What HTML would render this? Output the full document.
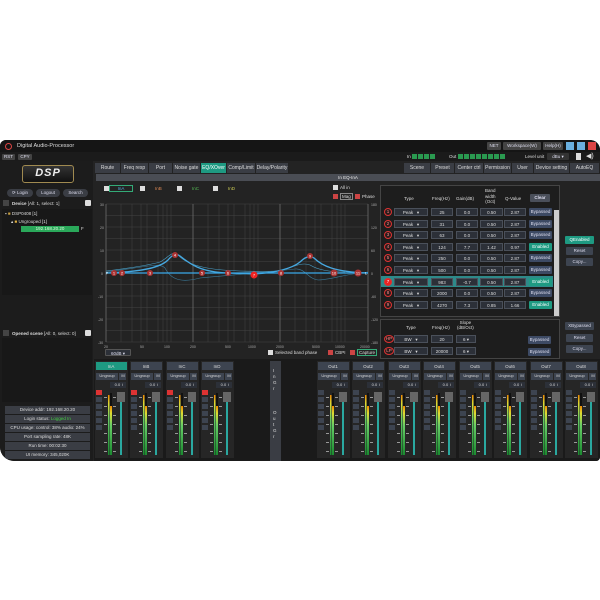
<!DOCTYPE html>
<html><head><meta charset="utf-8"><style>
*{margin:0;padding:0;box-sizing:border-box}
body{width:600px;height:600px;background:#fff;position:relative;overflow:hidden;font-family:"Liberation Sans",sans-serif;color:#ddd}
.a{position:absolute}
.w{position:absolute;left:0;top:140px;width:600px;height:321px;background:#232323;border-radius:6px 10px 4px 14px;overflow:hidden}
.b{position:absolute;background:#3d4450;color:#dde;font-size:4.5px;text-align:center;border-radius:1px;white-space:nowrap;overflow:hidden}
.t{position:absolute;font-size:4.5px;white-space:nowrap;color:#ddd}
.tab{position:absolute;top:23px;height:10px;background:#3a3d44;font-size:5px;line-height:10px;text-align:center;color:#ddd;border-right:1px solid #222}
.en{background:#1e9a82!important;color:#fff}
.cell{position:absolute;height:8px;background:#2c3038;border:1px solid #4a505a;font-size:4.5px;line-height:7px;text-align:center;color:#ddd}
.num{position:absolute;width:8px;height:8px;border-radius:50%;border:1px solid #d33;font-size:4.5px;line-height:6px;text-align:center;color:#f88;background:#2a1c1c}
.ch{position:absolute;top:221px;width:32px;height:97px;background:#2a2a2a}
.info{position:absolute;left:5px;width:85px;height:8px;background:#3a3d44;font-size:4.5px;line-height:8px;text-align:center;color:#ddd}
</style></head><body>
<div class="w">
<!-- title -->
<div class="a" style="left:0;top:0;width:600px;height:12px;background:#151515"></div>
<div class="a" style="left:5px;top:3px;width:7px;height:7px;border-radius:50%;border:1.5px solid #d44"></div>
<div class="t" style="left:17px;top:3px;font-size:5.5px">Digital Audio-Processor</div>
<div class="b" style="left:487px;top:2px;width:14px;height:8px;line-height:8px;background:#444">NET</div>
<div class="b" style="left:503px;top:2px;width:38px;height:8px;line-height:8px;background:#444">Workspace(W)</div>
<div class="b" style="left:543px;top:2px;width:20px;height:8px;line-height:8px;background:#444">Help(H)</div>
<div class="a" style="left:566px;top:2px;width:8px;height:8px;background:#6ab0e0"></div>
<div class="a" style="left:577px;top:2px;width:8px;height:8px;background:#6ab0e0"></div>
<div class="a" style="left:588px;top:2px;width:8px;height:8px;background:#d44"></div>
<!-- second bar -->
<div class="a" style="left:0;top:12px;width:600px;height:9px;background:#1b1b1b"></div>
<div class="b" style="left:2px;top:14px;width:13px;height:6px;line-height:6px;background:#444">RST</div>
<div class="b" style="left:18px;top:14px;width:14px;height:6px;line-height:6px;background:#444">CPY</div>
<div class="t" style="left:407px;top:14px">In</div>
<div class="a" style="left:412px;top:14px;width:24px;height:5px;background:repeating-linear-gradient(90deg,#2a9a50 0 5px,transparent 5px 6px)"></div>
<div class="t" style="left:449px;top:14px">Out</div>
<div class="a" style="left:458px;top:14px;width:48px;height:5px;background:repeating-linear-gradient(90deg,#2a9a50 0 5px,transparent 5px 6px)"></div>
<div class="t" style="left:525px;top:14px">Level unit</div>
<div class="b" style="left:547px;top:13px;width:22px;height:7px;line-height:7px;background:#333">dBu ▾</div>
<div class="a" style="left:576px;top:13px;width:5px;height:7px;background:#ddd"></div>
<div class="t" style="left:586px;top:12px;font-size:7px">◀)</div>
<!-- left panel -->
<div class="a" style="left:0;top:21px;width:93px;height:300px;background:#1c1c1c"></div>
<div class="a" style="left:22px;top:25px;width:52px;height:18px;border:1.5px solid #a08a50;border-radius:3px;background:linear-gradient(#333,#111);font-size:11px;font-weight:bold;font-style:italic;color:#eee;text-align:center;line-height:15px;letter-spacing:1px">DSP</div>
<div class="b" style="left:7px;top:49px;width:26px;height:8px;line-height:8px;border-radius:4px;background:#3a3d44">⟳ Login</div>
<div class="b" style="left:36px;top:49px;width:24px;height:8px;line-height:8px;border-radius:4px;background:#3a3d44">Logout</div>
<div class="b" style="left:63px;top:49px;width:25px;height:8px;line-height:8px;border-radius:4px;background:#3a3d44">Search</div>
<div class="a" style="left:3px;top:60px;width:6px;height:6px;background:#444"></div>
<div class="t" style="left:12px;top:61px"><b>Device</b> [All: 1, select: 1]</div>
<div class="a" style="left:85px;top:60px;width:6px;height:6px;background:#ddd;border-radius:1px"></div>
<div class="a" style="left:2px;top:69px;width:90px;height:86px;background:#181818"></div>
<div class="t" style="left:5px;top:71px">▪ <span style="color:#c9a040">■</span> DSP0408 [1]</div>
<div class="t" style="left:11px;top:79px">▴ <span style="color:#e0b040">■</span> Ungrouped [1]</div>
<div class="a" style="left:21px;top:86px;width:58px;height:6px;background:#2aa85a;font-size:4.5px;color:#dfd;text-align:center;line-height:6px">192.168.20.20</div>
<div class="t" style="left:81px;top:86px">F</div>
<div class="a" style="left:3px;top:190px;width:6px;height:6px;background:#444"></div>
<div class="t" style="left:12px;top:191px"><b>Opened scene</b> [All: 0, select: 0]</div>
<div class="a" style="left:85px;top:190px;width:6px;height:6px;background:#ddd;border-radius:1px"></div>
<div class="a" style="left:2px;top:198px;width:90px;height:64px;background:#181818"></div>
<div class="info" style="top:266px">Device addr: 192.168.20.20</div>
<div class="info" style="top:275px">Login status: <span style="color:#4c4">Logged In</span></div>
<div class="info" style="top:284px">CPU usage: control: 38% audio: 24%</div>
<div class="info" style="top:293px">Port sampling rate: 48K</div>
<div class="info" style="top:302px">Run time: 00:02:30</div>
<div class="info" style="top:311px">UI memory: 345,020K</div>
<!-- tabs -->
<div class="tab" style="left:95px;width:26px">Route</div>
<div class="tab" style="left:121px;width:28px">Freq resp</div>
<div class="tab" style="left:149px;width:24px">Port</div>
<div class="tab" style="left:173px;width:28px">Noise gate</div>
<div class="tab en" style="left:201px;width:26px">EQ/XOver</div>
<div class="tab" style="left:227px;width:29px">Comp/Limit</div>
<div class="tab" style="left:256px;width:33px">Delay/Polarity</div>
<div class="tab" style="left:404px;width:27px">Scene</div>
<div class="tab" style="left:431px;width:24px">Preset</div>
<div class="tab" style="left:455px;width:29px">Center ctrl</div>
<div class="tab" style="left:484px;width:28px">Permission</div>
<div class="tab" style="left:512px;width:22px">User</div>
<div class="tab" style="left:534px;width:36px">Device setting</div>
<div class="tab" style="left:570px;width:30px">AutoEQ</div>
<div class="a" style="left:96px;top:34px;width:504px;height:7px;background:#4a4d54;font-size:4.5px;text-align:center;line-height:7px;color:#eee">In EQ-InA</div>
<!-- graph area -->
<div class="a" style="left:96px;top:41px;width:283px;height:178px;background:#232323"></div>
<div class="a" style="left:104px;top:46px;width:5px;height:5px;background:#ddd"></div>
<div class="a" style="left:109px;top:45px;width:24px;height:7px;border:1px solid #3a7;font-size:4.5px;color:#5ad;text-align:center;line-height:5px">InA</div>
<div class="a" style="left:140px;top:46px;width:5px;height:5px;background:#ddd"></div><div class="t" style="left:155px;top:46px;color:#d85">InB</div>
<div class="a" style="left:177px;top:46px;width:5px;height:5px;background:#ddd"></div><div class="t" style="left:192px;top:46px;color:#5b5">InC</div>
<div class="a" style="left:213px;top:46px;width:5px;height:5px;background:#ddd"></div><div class="t" style="left:228px;top:46px;color:#cc5">InD</div>
<div class="a" style="left:333px;top:45px;width:5px;height:5px;background:#ddd"></div><div class="t" style="left:340px;top:45px">All in</div>
<div class="a" style="left:333px;top:54px;width:5px;height:5px;background:#c44"></div><div class="t" style="left:340px;top:53px;border:1px solid #888;padding:0 1px">Mag</div>
<div class="a" style="left:355px;top:54px;width:5px;height:5px;background:#c44"></div><div class="t" style="left:362px;top:54px">Phase</div>
<svg class="a" style="left:96px;top:60px" width="284" height="150" viewBox="96 200 284 150">
<g stroke="#444" stroke-width="0.5">
<line x1="106" y1="204" x2="368" y2="204"/><line x1="106" y1="215.5" x2="368" y2="215.5"/><line x1="106" y1="227" x2="368" y2="227"/><line x1="106" y1="238.5" x2="368" y2="238.5"/><line x1="106" y1="250" x2="368" y2="250"/><line x1="106" y1="261.5" x2="368" y2="261.5"/><line x1="106" y1="284.5" x2="368" y2="284.5"/><line x1="106" y1="296" x2="368" y2="296"/><line x1="106" y1="307.5" x2="368" y2="307.5"/><line x1="106" y1="319" x2="368" y2="319"/><line x1="106" y1="330.5" x2="368" y2="330.5"/><line x1="106" y1="342" x2="368" y2="342"/>
<line x1="121" y1="204" x2="121" y2="342"/><line x1="132" y1="204" x2="132" y2="342"/><line x1="141" y1="204" x2="141" y2="342"/><line x1="147" y1="204" x2="147" y2="342"/><line x1="158" y1="204" x2="158" y2="342"/><line x1="163" y1="204" x2="163" y2="342"/><line x1="167" y1="204" x2="167" y2="342"/><line x1="171" y1="204" x2="171" y2="342"/>
<line x1="208" y1="204" x2="208" y2="342"/><line x1="219" y1="204" x2="219" y2="342"/><line x1="228" y1="204" x2="228" y2="342"/><line x1="234" y1="204" x2="234" y2="342"/><line x1="245" y1="204" x2="245" y2="342"/><line x1="250" y1="204" x2="250" y2="342"/><line x1="254" y1="204" x2="254" y2="342"/><line x1="258" y1="204" x2="258" y2="342"/>
<line x1="295" y1="204" x2="295" y2="342"/><line x1="306" y1="204" x2="306" y2="342"/><line x1="315" y1="204" x2="315" y2="342"/><line x1="321" y1="204" x2="321" y2="342"/><line x1="332" y1="204" x2="332" y2="342"/><line x1="337" y1="204" x2="337" y2="342"/><line x1="341" y1="204" x2="341" y2="342"/><line x1="345" y1="204" x2="345" y2="342"/>
</g>
<g stroke="#777" stroke-width="0.7"><line x1="106" y1="204" x2="106" y2="342"/><line x1="193" y1="204" x2="193" y2="342"/><line x1="280" y1="204" x2="280" y2="342"/><line x1="368" y1="204" x2="368" y2="342"/><line x1="106" y1="273" x2="368" y2="273"/></g>
<g font-size="3.5" fill="#aaa" font-family="Liberation Sans"><text x="100" y="206">30</text><text x="100" y="229">20</text><text x="100" y="252">10</text><text x="101" y="275">0</text><text x="98" y="298">-10</text><text x="98" y="321">-20</text><text x="98" y="344">-30</text>
<text x="371" y="206">180</text><text x="371" y="229">120</text><text x="371" y="252">60</text><text x="371" y="275">0</text><text x="371" y="298">-60</text><text x="371" y="321">-120</text><text x="371" y="344">-180</text>
<text x="104" y="348">20</text><text x="140" y="348">50</text><text x="164" y="348">100</text><text x="190" y="348">200</text><text x="225" y="348">500</text><text x="248" y="348">1000</text><text x="276" y="348">2000</text><text x="312" y="348">5000</text><text x="335" y="348">10000</text><text x="360" y="348">20000</text></g>
<path d="M106 271 C130 268 150 265 160 262 C168 258 172 250 178 255 C188 265 205 273 280 271 C295 266 302 262 310 265 C318 270 330 272 345 272" stroke="#4aa0c8" stroke-width="0.6" fill="none"/>
<path d="M106 272 C140 268 160 262 165 268 C172 282 185 282 200 278 C230 275 270 272 295 269 C305 268 308 279 318 280 C330 280 345 274 368 272" stroke="#3a7a9a" stroke-width="0.6" fill="none"/>
<path d="M106 273 C140 272 160 268 168 260 C172 255 176 253 180 256 C190 264 200 272 228 273 L254 274 C270 273 290 270 300 262 C305 257 310 255 314 258 C322 266 335 272 368 273" stroke="#46a8e0" stroke-width="1.3" fill="none"/>
<line x1="106" y1="273" x2="368" y2="273" stroke="#3aa8e8" stroke-width="1.2"/>
<g font-size="4" fill="#fff" text-anchor="middle" font-family="Liberation Sans">
<circle cx="114" cy="273" r="3" fill="#a33"/><text x="114" y="274.5">1</text>
<circle cx="122" cy="273" r="3" fill="#a33"/><text x="122" y="274.5">2</text>
<circle cx="150" cy="273" r="3" fill="#a33"/><text x="150" y="274.5">3</text>
<circle cx="175" cy="255" r="3" fill="#a33"/><text x="175" y="256.5">4</text>
<circle cx="202" cy="273" r="3" fill="#a33"/><text x="202" y="274.5">5</text>
<circle cx="228" cy="273" r="3" fill="#a33"/><text x="228" y="274.5">6</text>
<circle cx="254" cy="275" r="3.5" fill="#e22"/><text x="254" y="276.5">7</text>
<circle cx="281" cy="273" r="3" fill="#a33"/><text x="281" y="274.5">8</text>
<circle cx="310" cy="256" r="3" fill="#a33"/><text x="310" y="257.5">9</text>
<circle cx="334" cy="273" r="3.5" fill="#a33"/><text x="334" y="274.5">10</text>
<circle cx="358" cy="273" r="3.5" fill="#a33"/><text x="358" y="274.5">11</text>
<text x="107" y="274.5">P</text><text x="366" y="274.5">L</text></g>
</svg>
<div class="b" style="left:105px;top:209px;width:26px;height:7px;line-height:7px;background:#2c3038;border:1px solid #555">60dB ▾</div>
<div class="a" style="left:268px;top:210px;width:5px;height:5px;background:#ddd"></div><div class="t" style="left:275px;top:210px">Selected band phase</div>
<div class="a" style="left:328px;top:210px;width:5px;height:5px;background:#c44"></div><div class="t" style="left:335px;top:210px">CBPI</div>
<div class="a" style="left:350px;top:210px;width:5px;height:5px;background:#c44"></div><div class="t" style="left:357px;top:209px;border:1px solid #3a7;padding:0 1px">Capture</div>
<!-- EQ table -->
<div class="a" style="left:380px;top:45px;width:180px;height:132px;background:#1d1d1d;border:1px solid #444"></div>
<div class="t" style="left:404px;top:56px">Type</div>
<div class="t" style="left:432px;top:56px">Freq(Hz)</div>
<div class="t" style="left:456px;top:56px">Gain(dB)</div>
<div class="t" style="left:485px;top:48px;text-align:center;line-height:5.5px">Band<br>width<br>(Oct)</div>
<div class="t" style="left:505px;top:56px">Q-Value</div>
<div class="b" style="left:530px;top:54px;width:20px;height:8px;line-height:8px;background:#4a4f5a"><b>Clear</b></div>
<div class="a" style="left:554px;top:70px;width:5px;height:106px;background:#ccc"></div>
<div class="a" style="left:381px;top:136px;width:172px;height:11px;background:#2e8a8a"></div>
<div id="rows"></div>
<!-- row template repeated -->
<div class="num" style="left:384px;top:68px">1</div><div class="cell" style="left:394px;top:68px;width:34px">Peak &nbsp;&nbsp;▾</div><div class="cell" style="left:431px;top:68px;width:22px">25</div><div class="cell" style="left:456px;top:68px;width:22px">0.0</div><div class="cell" style="left:480px;top:68px;width:23px">0.50</div><div class="cell" style="left:504px;top:68px;width:22px">2.87</div><div class="b" style="left:529px;top:68px;width:23px;height:8px;line-height:8px;background:#3d4a64">Bypassed</div>
<div class="num" style="left:384px;top:80px">2</div><div class="cell" style="left:394px;top:80px;width:34px">Peak &nbsp;&nbsp;▾</div><div class="cell" style="left:431px;top:80px;width:22px">31</div><div class="cell" style="left:456px;top:80px;width:22px">0.0</div><div class="cell" style="left:480px;top:80px;width:23px">0.50</div><div class="cell" style="left:504px;top:80px;width:22px">2.87</div><div class="b" style="left:529px;top:80px;width:23px;height:8px;line-height:8px;background:#3d4a64">Bypassed</div>
<div class="num" style="left:384px;top:91px">3</div><div class="cell" style="left:394px;top:91px;width:34px">Peak &nbsp;&nbsp;▾</div><div class="cell" style="left:431px;top:91px;width:22px">63</div><div class="cell" style="left:456px;top:91px;width:22px">0.0</div><div class="cell" style="left:480px;top:91px;width:23px">0.50</div><div class="cell" style="left:504px;top:91px;width:22px">2.87</div><div class="b" style="left:529px;top:91px;width:23px;height:8px;line-height:8px;background:#3d4a64">Bypassed</div>
<div class="num" style="left:384px;top:103px">4</div><div class="cell" style="left:394px;top:103px;width:34px">Peak &nbsp;&nbsp;▾</div><div class="cell" style="left:431px;top:103px;width:22px">124</div><div class="cell" style="left:456px;top:103px;width:22px">7.7</div><div class="cell" style="left:480px;top:103px;width:23px">1.42</div><div class="cell" style="left:504px;top:103px;width:22px">0.97</div><div class="b en" style="left:529px;top:103px;width:23px;height:8px;line-height:8px">Enabled</div>
<div class="num" style="left:384px;top:114px">5</div><div class="cell" style="left:394px;top:114px;width:34px">Peak &nbsp;&nbsp;▾</div><div class="cell" style="left:431px;top:114px;width:22px">250</div><div class="cell" style="left:456px;top:114px;width:22px">0.0</div><div class="cell" style="left:480px;top:114px;width:23px">0.50</div><div class="cell" style="left:504px;top:114px;width:22px">2.87</div><div class="b" style="left:529px;top:114px;width:23px;height:8px;line-height:8px;background:#3d4a64">Bypassed</div>
<div class="num" style="left:384px;top:126px">6</div><div class="cell" style="left:394px;top:126px;width:34px">Peak &nbsp;&nbsp;▾</div><div class="cell" style="left:431px;top:126px;width:22px">500</div><div class="cell" style="left:456px;top:126px;width:22px">0.0</div><div class="cell" style="left:480px;top:126px;width:23px">0.50</div><div class="cell" style="left:504px;top:126px;width:22px">2.87</div><div class="b" style="left:529px;top:126px;width:23px;height:8px;line-height:8px;background:#3d4a64">Bypassed</div>
<div class="num" style="left:384px;top:138px;background:#e22;color:#fff">7</div><div class="cell" style="left:394px;top:138px;width:34px">Peak &nbsp;&nbsp;▾</div><div class="cell" style="left:431px;top:138px;width:22px">983</div><div class="cell" style="left:456px;top:138px;width:22px">-0.7</div><div class="cell" style="left:480px;top:138px;width:23px">0.50</div><div class="cell" style="left:504px;top:138px;width:22px">2.87</div><div class="b en" style="left:529px;top:138px;width:23px;height:8px;line-height:8px">Enabled</div>
<div class="num" style="left:384px;top:149px">8</div><div class="cell" style="left:394px;top:149px;width:34px">Peak &nbsp;&nbsp;▾</div><div class="cell" style="left:431px;top:149px;width:22px">2000</div><div class="cell" style="left:456px;top:149px;width:22px">0.0</div><div class="cell" style="left:480px;top:149px;width:23px">0.50</div><div class="cell" style="left:504px;top:149px;width:22px">2.87</div><div class="b" style="left:529px;top:149px;width:23px;height:8px;line-height:8px;background:#3d4a64">Bypassed</div>
<div class="num" style="left:384px;top:161px">9</div><div class="cell" style="left:394px;top:161px;width:34px">Peak &nbsp;&nbsp;▾</div><div class="cell" style="left:431px;top:161px;width:22px">4270</div><div class="cell" style="left:456px;top:161px;width:22px">7.3</div><div class="cell" style="left:480px;top:161px;width:23px">0.85</div><div class="cell" style="left:504px;top:161px;width:22px">1.66</div><div class="b en" style="left:529px;top:161px;width:23px;height:8px;line-height:8px">Enabled</div>
<div class="b en" style="left:565px;top:96px;width:29px;height:8px;line-height:8px">QEnabled</div>
<div class="b" style="left:566px;top:107px;width:27px;height:8px;line-height:8px;background:#3d4450">Reset</div>
<div class="b" style="left:566px;top:118px;width:27px;height:8px;line-height:8px;background:#3d4450">Copy...</div>
<!-- crossover -->
<div class="a" style="left:380px;top:179px;width:180px;height:40px;background:#1d1d1d;border:1px solid #444"></div>
<div class="t" style="left:406px;top:185px">Type</div>
<div class="t" style="left:432px;top:185px">Freq(Hz)</div>
<div class="t" style="left:457px;top:180px;text-align:center;line-height:5px">Slope<br>(dB/Oct)</div>
<div class="num" style="left:384px;top:195px;width:10px">HP</div><div class="cell" style="left:394px;top:195px;width:34px">BW &nbsp;&nbsp;▾</div><div class="cell" style="left:431px;top:195px;width:22px">20</div><div class="cell" style="left:456px;top:195px;width:20px">6 ▾</div><div class="b" style="left:528px;top:196px;width:23px;height:8px;line-height:8px;background:#3d4a64">Bypassed</div>
<div class="num" style="left:384px;top:207px;width:10px">LP</div><div class="cell" style="left:394px;top:207px;width:34px">BW &nbsp;&nbsp;▾</div><div class="cell" style="left:431px;top:207px;width:22px">20000</div><div class="cell" style="left:456px;top:207px;width:20px">6 ▾</div><div class="b" style="left:528px;top:208px;width:23px;height:8px;line-height:8px;background:#3d4a64">Bypassed</div>
<div class="b" style="left:565px;top:182px;width:29px;height:8px;line-height:8px">XBypassed</div>
<div class="b" style="left:566px;top:194px;width:27px;height:8px;line-height:8px">Reset</div>
<div class="b" style="left:566px;top:205px;width:27px;height:8px;line-height:8px">Copy...</div>
<!-- mixer -->
<div class="a" style="left:94px;top:219px;width:506px;height:102px;background:#1a1a1a"></div>
<div class="a" style="left:270px;top:221px;width:11px;height:100px;background:#3a3d44"></div>
<div class="t" style="left:273px;top:228px;line-height:6px">I<br>n<br>G<br>r</div>
<div class="t" style="left:273px;top:270px;line-height:6px">O<br>u<br>t<br>G<br>r</div>
</div>
<!-- channels -->
<svg class="a" style="left:0;top:0" width="600" height="600">
<defs><linearGradient id="m" x1="0" y1="1" x2="0" y2="0"><stop offset="0" stop-color="#1a8a30"/><stop offset="0.6" stop-color="#6c6"/><stop offset="0.85" stop-color="#dd3"/><stop offset="1" stop-color="#e80"/></linearGradient>
<g id="ch"><rect x="0" y="0" width="33" height="97" fill="#262626"/>
<rect x="1" y="12" width="22" height="7" fill="#3d4450"/><rect x="24" y="12" width="7" height="7" fill="#3d4450"/>
<rect x="15" y="21" width="16" height="6" fill="#2c3038"/>
<rect x="1" y="29" width="6" height="5" fill="#3d4450"/><rect x="1" y="36" width="6" height="5" fill="#3d4450"/><rect x="1" y="43" width="6" height="5" fill="#3d4450"/><rect x="1" y="50" width="6" height="5" fill="#3d4450"/><rect x="1" y="57" width="6" height="5" fill="#3d4450"/><rect x="1" y="64" width="6" height="5" fill="#3d4450"/>
<rect x="13" y="34" width="1.5" height="60" fill="url(#m)"/><rect x="15" y="32" width="2" height="62" fill="#111"/><rect x="15" y="45" width="2" height="49" fill="url(#m)"/>
<rect x="25" y="38" width="2" height="56" fill="#2aa8a0"/><rect x="22" y="31" width="8" height="10" fill="#666"/>
<g fill="#999"><rect x="9" y="36" width="3" height="1"/><rect x="9" y="45" width="3" height="1"/><rect x="9" y="54" width="3" height="1"/><rect x="9" y="63" width="3" height="1"/><rect x="9" y="72" width="3" height="1"/><rect x="9" y="81" width="3" height="1"/><rect x="9" y="90" width="3" height="1"/><rect x="18" y="36" width="3" height="1"/><rect x="18" y="45" width="3" height="1"/><rect x="18" y="54" width="3" height="1"/><rect x="18" y="63" width="3" height="1"/><rect x="18" y="72" width="3" height="1"/><rect x="18" y="81" width="3" height="1"/><rect x="18" y="90" width="3" height="1"/></g></g></defs>
<g font-family="Liberation Sans" font-size="4.5" fill="#ddd" text-anchor="middle">
<use href="#ch" x="95" y="361"/><use href="#ch" x="130" y="361"/><use href="#ch" x="166" y="361"/><use href="#ch" x="201" y="361"/>
<use href="#ch" x="317" y="361"/><use href="#ch" x="352" y="361"/><use href="#ch" x="388" y="361"/><use href="#ch" x="423" y="361"/><use href="#ch" x="459" y="361"/><use href="#ch" x="494" y="361"/><use href="#ch" x="530" y="361"/><use href="#ch" x="565" y="361"/>
<rect x="96" y="362" width="31" height="8" fill="#1e9a82"/><text x="111" y="368">InA</text>
<rect x="131" y="362" width="31" height="8" fill="#3d4450"/><text x="146" y="368">InB</text>
<rect x="167" y="362" width="31" height="8" fill="#3d4450"/><text x="182" y="368">InC</text>
<rect x="202" y="362" width="31" height="8" fill="#3d4450"/><text x="217" y="368">InD</text>
<rect x="318" y="362" width="31" height="8" fill="#3d4450"/><text x="333" y="368">Out1</text>
<rect x="353" y="362" width="31" height="8" fill="#3d4450"/><text x="368" y="368">Out2</text>
<rect x="389" y="362" width="31" height="8" fill="#3d4450"/><text x="404" y="368">Out3</text>
<rect x="424" y="362" width="31" height="8" fill="#3d4450"/><text x="439" y="368">Out4</text>
<rect x="460" y="362" width="31" height="8" fill="#3d4450"/><text x="475" y="368">Out5</text>
<rect x="495" y="362" width="31" height="8" fill="#3d4450"/><text x="510" y="368">Out6</text>
<rect x="531" y="362" width="31" height="8" fill="#3d4450"/><text x="546" y="368">Out7</text>
<rect x="566" y="362" width="31" height="8" fill="#3d4450"/><text x="581" y="368">Out8</text>
<g font-size="4"><text x="107" y="377">Ungroup</text><text x="142" y="377">Ungroup</text><text x="178" y="377">Ungroup</text><text x="213" y="377">Ungroup</text><text x="329" y="377">Ungroup</text><text x="364" y="377">Ungroup</text><text x="400" y="377">Ungroup</text><text x="435" y="377">Ungroup</text><text x="471" y="377">Ungroup</text><text x="506" y="377">Ungroup</text><text x="542" y="377">Ungroup</text><text x="577" y="377">Ungroup</text>
<text x="123" y="377">M</text><text x="158" y="377">M</text><text x="194" y="377">M</text><text x="229" y="377">M</text><text x="345" y="377">M</text><text x="380" y="377">M</text><text x="416" y="377">M</text><text x="451" y="377">M</text><text x="487" y="377">M</text><text x="522" y="377">M</text><text x="558" y="377">M</text><text x="593" y="377">M</text>
<text x="119" y="386">0.0 ↕</text><text x="154" y="386">0.0 ↕</text><text x="190" y="386">0.0 ↕</text><text x="225" y="386">0.0 ↕</text><text x="341" y="386">0.0 ↕</text><text x="376" y="386">0.0 ↕</text><text x="412" y="386">0.0 ↕</text><text x="447" y="386">0.0 ↕</text><text x="483" y="386">0.0 ↕</text><text x="518" y="386">0.0 ↕</text><text x="554" y="386">0.0 ↕</text><text x="589" y="386">0.0 ↕</text></g>
<g fill="#d33"><rect x="96" y="390" width="6" height="5"/><rect x="131" y="390" width="6" height="5"/><rect x="167" y="390" width="6" height="5"/><rect x="202" y="390" width="6" height="5"/></g>
</g>
</svg>
</body></html>
